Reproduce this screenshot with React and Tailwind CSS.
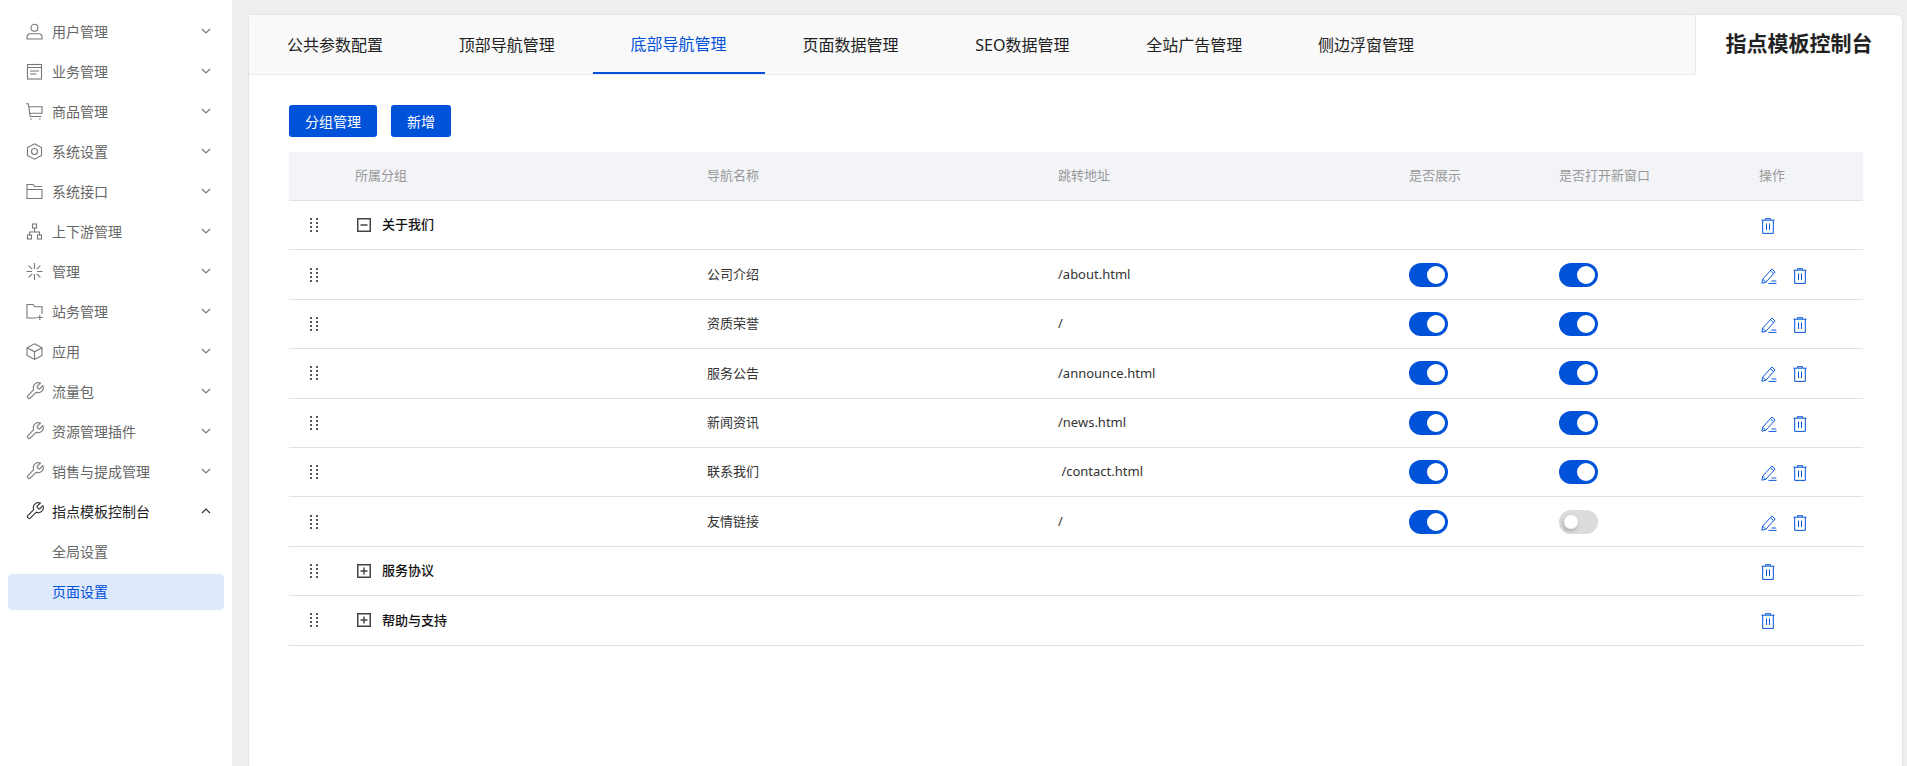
const FONT = { fontFamily: '"Noto Sans", "Noto Sans CJK SC", sans-serif' };

const Svg = ({ children, size = 17, box = '0 0 17 17', className = '', ...rest }) => (
  <svg width={size} height={size} viewBox={box} fill="none" stroke="currentColor" strokeWidth="1.1" className={className} {...rest}>
    {children}
  </svg>
);

const UserIcon = () => (
  <Svg>
    <circle cx="8.5" cy="4.7" r="3.4" />
    <path d="M1 16v-2a3.2 3.2 0 0 1 3.2-3.2h8.6A3.2 3.2 0 0 1 16 14v2z" />
  </Svg>
);
const ListIcon = () => (
  <Svg>
    <rect x="1.5" y="1.5" width="14" height="14.5" />
    <path d="M1.5 4.5h14M4 8h9M4 11h6.5" />
  </Svg>
);
const CartIcon = () => (
  <Svg>
    <path d="M0 .8h2.3l1.9 12.7h11.2M3 3.8h13v6.4H4" />
    <path d="M4.5 16h1.6M13 16h1.6" />
  </Svg>
);
const HexIcon = () => (
  <Svg>
    <path d="M8.5.8 15.5 4.6v7.8l-7 3.8-7-3.8V4.6z" />
    <circle cx="8.5" cy="8.5" r="3" />
  </Svg>
);
const FolderIcon = () => (
  <Svg>
    <path d="M1 15.5V6.5h15v9zM1 6.5V1.5h6l1.5 2H16" />
  </Svg>
);
const OrgIcon = () => (
  <Svg>
    <rect x="6.5" y="1" width="4" height="4" />
    <rect x="1.5" y="12" width="4" height="4" />
    <rect x="11.5" y="12" width="4" height="4" />
    <path d="M8.5 5v4M3.5 12V9h10v3" />
  </Svg>
);
const SparkIcon = () => (
  <Svg>
    <path d="M8.5 0v6M8.5 11v6M.5 8.5h5.5M11 8.5h5.5M2.6 2.6l3.6 3.6M10.8 10.8l3.6 3.6M14.4 2.6l-3.6 3.6M6.2 10.8l-3.6 3.6" />
  </Svg>
);
const FolderAddIcon = () => (
  <Svg>
    <path d="M10.5 15H1V1.5h6l1.8 2.3H16V11" />
    <path d="M11 14.5h5.5M13.8 12v5" />
  </Svg>
);
const CubeIcon = () => (
  <Svg>
    <path d="M8.5.8 16 4.8v7.6l-7.5 4-7.5-4V4.8zM1 4.8l7.5 4 7.5-4M8.5 8.8v7.6" />
  </Svg>
);
const WrenchIcon = () => (
  <Svg size={20} box="0 0 24 24" strokeWidth="1.3" className="-ml-[1.5px] -mr-[1.5px]">
    <path d="M14.7 6.3a1 1 0 0 0 0 1.4l1.6 1.6a1 1 0 0 0 1.4 0l3.77-3.77a6 6 0 0 1-7.94 7.94l-6.91 6.91a2.12 2.12 0 0 1-3-3l6.91-6.91a6 6 0 0 1 7.94-7.94l-3.76 3.76z" />
  </Svg>
);

const Chevron = ({ up, className = '' }) => (
  <svg width="10" height="6" viewBox="0 0 10 6" fill="none" stroke="currentColor" strokeWidth="1.2" className={className}>
    <path d={up ? 'M1 5l4-4 4 4' : 'M1 1l4 4 4-4'} />
  </svg>
);

const TrashIcon = () => (
  <svg width="14" height="16" viewBox="0 0 14 16" fill="none" stroke="#0052d9" strokeWidth="1">
    <path d="M4.5 2V.7h5V2M.5 2.2h13" />
    <path d="M1.7 2.2v13.2h10.6V2.2" />
    <path d="M5.5 5.5v6.5M8.5 5.5v6.5" />
  </svg>
);

const EditIcon = () => (
  <svg width="16" height="16" viewBox="0 0 16 16" fill="none" stroke="#0052d9" strokeWidth="0.95">
    <path d="M.8 15.2l.9-4L10.9 1l3.2 3-9.3 10.3z" />
    <path d="M9.4 2.7l3.2 3M1.7 11.2l3.1 3.1" />
    <path d="M10.5 13h4.8M7.5 15.4h8" />
  </svg>
);

const Grip = () => (
  <svg width="8" height="14" viewBox="0 0 8 14" fill="#555">
    {[0, 4, 8, 12].map((y) => (
      <g key={y}>
        <rect x="0" y={y} width="2" height="2" />
        <rect x="6" y={y} width="2" height="2" />
      </g>
    ))}
  </svg>
);

const ExpandBox = ({ open }) => (
  <svg width="14" height="14" viewBox="0 0 14 14" fill="none" stroke="#444" strokeWidth="1.5">
    <rect x="0.75" y="0.75" width="12.5" height="12.5" />
    <path d={open ? 'M3.5 7h7' : 'M3.5 7h7M7 3.5v7'} />
  </svg>
);

const Toggle = ({ on }) =>
  on ? (
    <span className="flex h-[24px] w-[39px] items-center justify-end rounded-full bg-[#0052d9] pr-[3px]">
      <span className="h-[18px] w-[18px] rounded-full bg-white" />
    </span>
  ) : (
    <span className="flex h-[24px] w-[39px] items-center rounded-full bg-[#dcdcdc] pl-[5px]">
      <span className="h-[14px] w-[14px] rounded-full bg-white shadow-[-1px_2px_4px_rgba(0,0,0,0.25)]" />
    </span>
  );

const MENU = [
  { label: '用户管理', Icon: UserIcon },
  { label: '业务管理', Icon: ListIcon },
  { label: '商品管理', Icon: CartIcon },
  { label: '系统设置', Icon: HexIcon },
  { label: '系统接口', Icon: FolderIcon },
  { label: '上下游管理', Icon: OrgIcon },
  { label: '管理', Icon: SparkIcon },
  { label: '站务管理', Icon: FolderAddIcon },
  { label: '应用', Icon: CubeIcon },
  { label: '流量包', Icon: WrenchIcon },
  { label: '资源管理插件', Icon: WrenchIcon },
  { label: '销售与提成管理', Icon: WrenchIcon },
];

const TABS = ['公共参数配置', '顶部导航管理', '底部导航管理', '页面数据管理', 'SEO数据管理', '全站广告管理', '侧边浮窗管理'];

const ROWS = [
  { group: '关于我们', open: true },
  { name: '公司介绍', url: '/about.html', show: true, blank: true },
  { name: '资质荣誉', url: '/', show: true, blank: true },
  { name: '服务公告', url: '/announce.html', show: true, blank: true },
  { name: '新闻资讯', url: '/news.html', show: true, blank: true },
  { name: '联系我们', url: ' /contact.html', show: true, blank: true },
  { name: '友情链接', url: '/', show: true, blank: false },
  { group: '服务协议' },
  { group: '帮助与支持' },
];

const COLS = 'grid grid-cols-[66px_352px_351px_351px_150px_200px_104px] items-center';

const Sidebar = () => (
  <aside className="w-[232px] shrink-0 bg-white pt-[11px]">
    {MENU.map(({ label, Icon }) => (
      <div key={label} className="flex h-[40px] items-center pl-[26px] pr-[21px] text-[14px] text-[#666]">
        <span className="flex w-[26px] shrink-0 text-[#777]">
          <Icon />
        </span>
        <span className="flex-1">{label}</span>
        <Chevron className="text-[#777]" />
      </div>
    ))}
    <div className="flex h-[40px] items-center pl-[26px] pr-[21px] text-[14px] text-[#222]">
      <span className="flex w-[26px] shrink-0 text-[#333]">
        <WrenchIcon />
      </span>
      <span className="flex-1">指点模板控制台</span>
      <Chevron up className="text-[#333]" />
    </div>
    <div className="flex h-[40px] items-center pl-[52px] text-[14px] text-[#666]">全局设置</div>
    <div className="mx-[8px] mt-[3px] flex h-[36px] items-center rounded-[4px] bg-[#dfe9fc] pb-[2px] pl-[44px] text-[14px] text-[#0052d9]">
      页面设置
    </div>
  </aside>
);

const TableRow = ({ row }) => (
  <div className={`${COLS} h-[49.4px] border-b border-[#e0e0e0] text-[13px] text-[#333]`}>
    <div className="flex pl-[21px]">
      <Grip />
    </div>
    <div className="flex items-center gap-[11px] pl-[2px] font-medium text-[#111]">
      {row.group && (
        <>
          <ExpandBox open={row.open} />
          {row.group}
        </>
      )}
    </div>
    <div>{row.name}</div>
    <div className="whitespace-pre">{row.url}</div>
    <div>{row.group ? null : <Toggle on={row.show} />}</div>
    <div>{row.group ? null : <Toggle on={row.blank} />}</div>
    <div className="flex items-center gap-[16px] pl-[2px] pt-[2px]">
      {!row.group && <EditIcon />}
      <TrashIcon />
    </div>
  </div>
);

export default function App() {
  return (
    <div className="flex h-screen overflow-hidden bg-[#eeeeee]" style={FONT}>
      <Sidebar />
      <main className="ml-[16px] mr-[4px] mt-[14px] min-w-0 flex-1 rounded-t-[6px] border-x border-t border-[#e4e4e4] bg-white">
        <div className="flex h-[60px]">
          <div className="flex flex-1 border-b border-r border-[#eaeaea] bg-[#f9f9f9]">
            {TABS.map((tab) => (
              <div
                key={tab}
                className={
                  tab === '底部导航管理'
                    ? 'flex w-[171.85px] items-center justify-center border-b-2 border-[#0052d9] text-[16px] text-[#0052d9]'
                    : 'flex w-[171.85px] items-center justify-center text-[16px] text-[#222]'
                }
              >
                {tab}
              </div>
            ))}
          </div>
          <div className="flex w-[206px] items-center justify-center pb-[2px] text-[21px] font-bold text-[#222]">
            指点模板控制台
          </div>
        </div>
        <div className="pl-[40px] pr-[39px] pt-[30px]">
          <div className="mb-[15px] flex gap-[14px]">
            <button className="h-[32px] w-[88px] rounded-[3px] bg-[#0052d9] text-[14px] text-white">分组管理</button>
            <button className="h-[32px] w-[60px] rounded-[3px] bg-[#0052d9] text-[14px] text-white">新增</button>
          </div>
          <div className={`${COLS} h-[49px] border-b border-[#e0e0e0] bg-[#f3f4f8] text-[13px] text-[#999]`}>
            <div />
            <div>所属分组</div>
            <div>导航名称</div>
            <div>跳转地址</div>
            <div>是否展示</div>
            <div>是否打开新窗口</div>
            <div>操作</div>
          </div>
          {ROWS.map((row) => (
            <TableRow key={row.group || row.name} row={row} />
          ))}
        </div>
      </main>
    </div>
  );
}
